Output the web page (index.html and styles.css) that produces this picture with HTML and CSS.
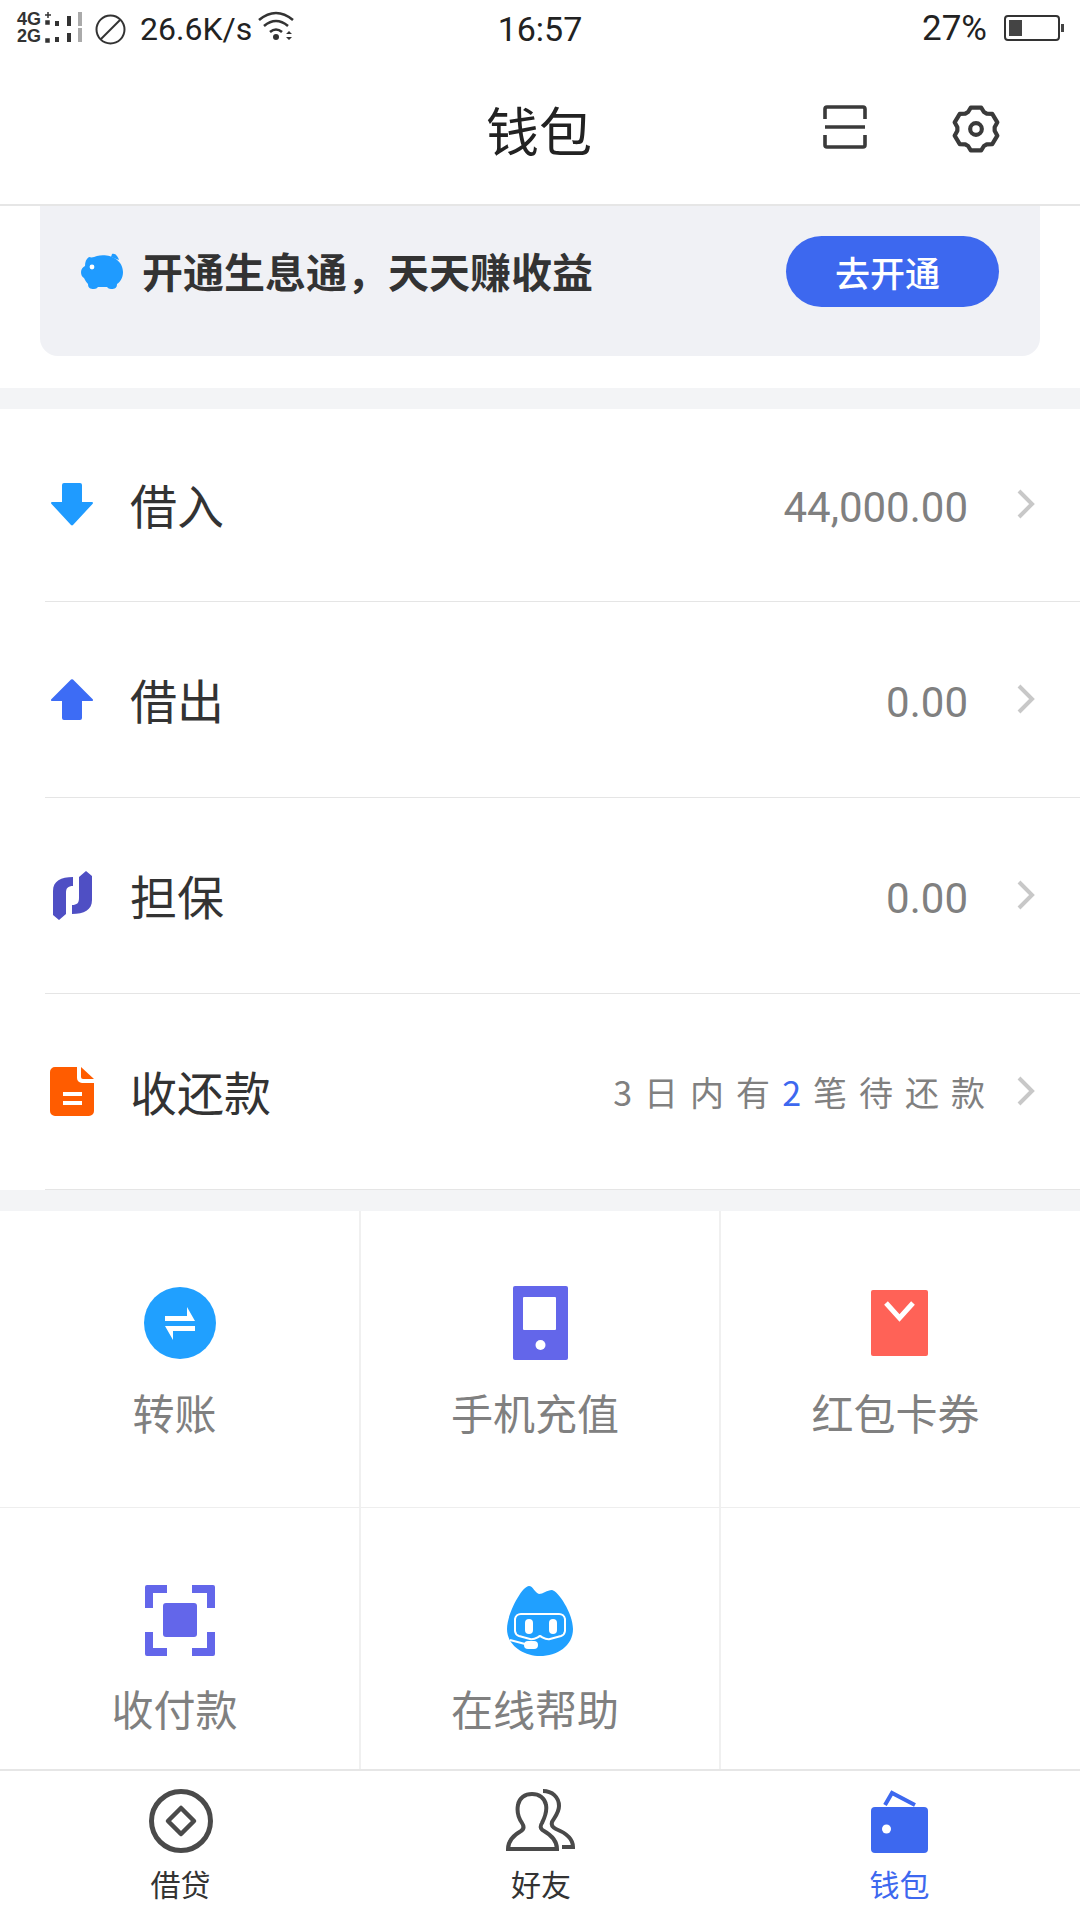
FILE: index.html
```html
<!DOCTYPE html>
<html lang="zh-CN">
<head>
<meta charset="UTF-8" />
<meta name="viewport" content="width=device-width, initial-scale=1" />
<title>钱包</title>
<link rel="stylesheet" href="styles.css">
</head>
<body>
<div class="page">

  <div class="status">
    <div class="status-left">
      <svg class="sig" width="68" height="32" viewBox="0 0 68 32">
        <text x="0" y="13" class="sig-text">4G</text>
        <text x="0" y="30" class="sig-text">2G</text>
        <path d="M28 3h6M31 0v6M29 9h3v3h-3zM29 27h3v3h-3z" class="sig-mark"/>
        <rect x="38" y="9" width="4" height="5" fill="#333"/>
        <rect x="50" y="4" width="4" height="10" fill="#333"/>
        <rect x="61" y="0" width="4" height="14" fill="#aaa"/>
        <rect x="38" y="25" width="4" height="5" fill="#333"/>
        <rect x="50" y="21" width="4" height="9" fill="#333"/>
        <rect x="61" y="16" width="4" height="14" fill="#aaa"/>
      </svg>
      <svg class="nodist" width="31" height="31" viewBox="0 0 31 31">
        <circle cx="15.5" cy="15.5" r="14" fill="none" stroke="#333" stroke-width="2"/>
        <path d="M6 25L25 6" stroke="#333" stroke-width="2"/>
      </svg>
      <span class="speed">26.6K/s</span>
      <svg class="wifi" width="37" height="31" viewBox="0 0 37 31">
        <g fill="none" stroke="#333" stroke-width="2.6">
          <path d="M1 10Q18 -4 35 10"/>
          <path d="M6 16Q18 6 30 16"/>
          <path d="M12 22Q18 17 24 22"/>
        </g>
        <circle cx="18" cy="27" r="3" fill="#333"/>
        <path d="M28 24l3 -3l3 3zM28 27l3 3l3 -3z" fill="#333"/>
      </svg>
    </div>
    <div class="time">16:57</div>
    <div class="status-right">
      <span class="pct">27%</span>
      <div class="battery"><div class="battery-fill"></div></div>
      <div class="battery-nub"></div>
    </div>
  </div>

  <header class="nav">
    <h1 class="nav-title">钱包</h1>
    <svg class="nav-scan" width="44" height="44" viewBox="0 0 44 44" fill="none" stroke="#3a3a3a" stroke-width="3.6">
      <path d="M2 14V4a2 2 0 0 1 2 -2h36a2 2 0 0 1 2 2v10"/>
      <path d="M2 22H42"/>
      <path d="M2 30V40a2 2 0 0 0 2 2h36a2 2 0 0 0 2 -2V30"/>
    </svg>
    <svg class="nav-gear" width="50" height="50" viewBox="0 0 48 48" fill="none" stroke="#3a3a3a" stroke-width="4" stroke-linejoin="round">
      <path d="M16.4 7.7L19 3.5H29L31.6 7.7L34.3 9.25L39.6 9.5L44.5 17.6L41.9 22.4V25.6L44.5 30.4L39.6 38.5L34.3 38.75L31.6 40.3L29 44.5H19L16.4 40.3L13.7 38.75L8.4 38.5L3.5 30.4L6.1 25.6V22.4L3.5 17.6L8.4 9.5L13.7 9.25Z"/>
      <circle cx="24" cy="24" r="5.6"/>
    </svg>
  </header>

  <section class="promo">
    <div class="banner">
      <svg class="pig" width="42" height="37" viewBox="0 0 42 37">
        <path d="M31 1C34 0 37 3 38 7L30 4Z" fill="#1f9bff"/>
        <path d="M8 4C11 5 13 4 16 3C27 0 42 6 42 19C42 25 39 29 36 31C36 35 34 36 30 36C28 36 27 35 26 34H17C16 35 15 36 13 36C9 36 7 35 7 31C5 29 4 27 3 25C1 24 0 22 0 19C0 16 2 14 4 13C4 9 5 6 8 4Z" fill="#1f9bff"/>
        <circle cx="11" cy="14" r="2.4" fill="#fff"/>
      </svg>
      <span class="banner-text">开通生息通，天天赚收益</span>
      <span class="banner-btn">去开通</span>
    </div>
  </section>

  <div class="gap"></div>

  <section class="list">
    <div class="row">
      <div class="row-icon">
        <svg width="42" height="43" viewBox="0 0 42 43"><path d="M11 2a2 2 0 0 1 2 -2H29a2 2 0 0 1 2 2V19H41a1 1 0 0 1 0.7 1.7L22 42a1.500 1.500 0 0 1 -2 0L0.300 20.700A1 1 0 0 1 1 19H11Z" fill="#1f9bff"/></svg>
      </div>
      <span class="row-label">借入</span>
      <span class="row-value">44,000.00</span>
      <svg class="chev" width="20" height="32" viewBox="0 0 20 32"><path d="M3 3L16 16L3 29" fill="none" stroke="#c8c8c8" stroke-width="4"/></svg>
    </div>
    <div class="row">
      <div class="row-icon">
        <svg width="42" height="41" viewBox="0 0 42 41"><path d="M11 39a2 2 0 0 0 2 2H29a2 2 0 0 0 2 -2V22H41a1 1 0 0 0 0.7 -1.700L22 0.600a1.500 1.500 0 0 0 -2 0L0.300 20.300A1 1 0 0 0 1 22H11Z" fill="#3d6cf5"/></svg>
      </div>
      <span class="row-label">借出</span>
      <span class="row-value">0.00</span>
      <svg class="chev" width="20" height="32" viewBox="0 0 20 32"><path d="M3 3L16 16L3 29" fill="none" stroke="#c8c8c8" stroke-width="4"/></svg>
    </div>
    <div class="row">
      <div class="row-icon">
        <svg width="39" height="49" viewBox="0 0 39 49" fill="#4f4fc4">
          <path d="M20 6V15C15 15 13 17 13 22V43L6 49L0 44V20C0 10 8 6 20 6Z"/>
          <path d="M19 43V34C24 34 26 32 26 27V6L33 0L39 5V29C39 39 31 43 19 43Z"/>
        </svg>
      </div>
      <span class="row-label">担保</span>
      <span class="row-value">0.00</span>
      <svg class="chev" width="20" height="32" viewBox="0 0 20 32"><path d="M3 3L16 16L3 29" fill="none" stroke="#c8c8c8" stroke-width="4"/></svg>
    </div>
    <div class="row row-last">
      <div class="row-icon">
        <svg width="44" height="49" viewBox="0 0 44 49">
          <path d="M5 0H27V11a5 5 0 0 0 5 5H44V44a5 5 0 0 1 -5 5H5a5 5 0 0 1 -5 -5V5a5 5 0 0 1 5 -5Z" fill="#ff5c00"/>
          <path d="M31 0L44 12H33a2 2 0 0 1 -2 -2Z" fill="#ff5c00"/>
          <rect x="13" y="25" width="19" height="4" fill="#fff"/>
          <rect x="13" y="34" width="19" height="4" fill="#fff"/>
        </svg>
      </div>
      <span class="row-label">收还款</span>
      <span class="row-note">3日内有<em>2</em>笔待还款</span>
      <svg class="chev" width="20" height="32" viewBox="0 0 20 32"><path d="M3 3L16 16L3 29" fill="none" stroke="#c8c8c8" stroke-width="4"/></svg>
    </div>
  </section>

  <div class="gap"></div>

  <section class="grid">
    <div class="cell cell-tall">
      <div class="cell-icon">
        <svg width="72" height="72" viewBox="0 0 72 72">
          <circle cx="36" cy="36" r="36" fill="#20a0ff"/>
          <path d="M21 29H43V20L51 34H21Z M51 44H29V53L21 39H51Z" fill="#fff"/>
        </svg>
      </div>
      <span class="cell-label">转账</span>
    </div>
    <div class="cell cell-tall">
      <div class="cell-icon">
        <svg width="55" height="74" viewBox="0 0 55 74">
          <rect width="55" height="74" rx="2" fill="#6366ea"/>
          <rect x="10" y="11" width="33" height="33" rx="1" fill="#fff"/>
          <circle cx="27.500" cy="59" r="5" fill="#fff"/>
        </svg>
      </div>
      <span class="cell-label">手机充值</span>
    </div>
    <div class="cell cell-tall">
      <div class="cell-icon cell-icon-shift">
        <svg width="57" height="66" viewBox="0 0 57 66">
          <rect width="57" height="66" rx="2" fill="#ff6257"/>
          <path d="M15 13L28.500 28L42 13" fill="none" stroke="#fff" stroke-width="5"/>
        </svg>
      </div>
      <span class="cell-label">红包卡券</span>
    </div>
    <div class="cell">
      <div class="cell-icon">
        <svg width="70" height="71" viewBox="0 0 70 71" fill="#6366ea">
          <path d="M2 0H22V8H8V23H0V2a2 2 0 0 1 2 -2Z"/>
          <path d="M68 0H47V8H62V23H70V2a2 2 0 0 0 -2 -2Z"/>
          <path d="M2 71H22V63H8V47H0V69a2 2 0 0 0 2 2Z"/>
          <path d="M68 71H47V63H62V47H70V69a2 2 0 0 1 -2 2Z"/>
          <rect x="18" y="18" width="34" height="34" rx="3"/>
        </svg>
      </div>
      <span class="cell-label">收付款</span>
    </div>
    <div class="cell">
      <div class="cell-icon">
        <svg width="66" height="71" viewBox="0 0 66 71">
          <path d="M22 1C26 1 28 8 32 9C36 9 40 5 45 5C51 6 66 28 66 44C66 61 50 71 33 71C16 71 0 60 0 44C0 29 15 1 22 1Z" fill="#20a0ff"/>
          <path d="M8 34a6 6 0 0 1 6 -5H52a6 6 0 0 1 6 5V46a6 6 0 0 1 -4 5L43 54C39 55 37 53 33 51C29 53 27 55 23 54L12 51a6 6 0 0 1 -4 -5Z" fill="none" stroke="#fff" stroke-width="2"/>
          <rect x="18" y="34" width="8" height="15" rx="4" fill="#fff"/>
          <rect x="42" y="34" width="8" height="15" rx="4" fill="#fff"/>
          <path d="M3 55L18 59" stroke="#fff" stroke-width="2"/>
          <rect x="17" y="56" width="14" height="8" rx="4" fill="#fff"/>
        </svg>
      </div>
      <span class="cell-label">在线帮助</span>
    </div>
    <div class="cell"></div>
  </section>

  <nav class="tabs">
    <div class="tab">
      <svg width="64" height="64" viewBox="0 0 64 64" fill="none" stroke="#4a4a4a">
        <circle cx="32" cy="32" r="29.500" stroke-width="5"/>
        <path d="M32 19L45 32L32 45L19 32Z" stroke-width="4.500" stroke-linejoin="round"/>
      </svg>
      <span class="tab-label">借贷</span>
    </div>
    <div class="tab">
      <svg width="70" height="64" viewBox="0 0 70 64" fill="none" stroke="#4a4a4a" stroke-width="4">
        <path d="M2 60C2 51 8 46 15 42C18 40 18 37 16 34C12 28 11 21 12 16C13 9 19 5 26 5C33 5 39 9 40 16C41 21 39 28 36 34C34 37 34 40 38 42C45 46 51 51 51 60Z"/>
        <path d="M37 2C46 2 53 8 53 17C53 24 48 29 46 33C45 36 46 38 50 40C60 44 67 49 67 58H56"/>
      </svg>
      <span class="tab-label">好友</span>
    </div>
    <div class="tab tab-on">
      <svg width="57" height="64" viewBox="0 0 57 64">
        <path d="M14 16L21 4L44 16" fill="none" stroke="#3d68ef" stroke-width="4"/>
        <rect y="18" width="57" height="46" rx="4" fill="#3d68ef"/>
        <circle cx="15.500" cy="40" r="4.500" fill="#fff"/>
      </svg>
      <span class="tab-label">钱包</span>
    </div>
  </nav>

</div>
</body>
</html>
```

FILE: styles.css
```css
* { box-sizing: border-box; }
body { margin: 0; padding: 0; background: #fff; font-family: "Noto Sans CJK SC", Roboto, sans-serif; color: #333; }
.page { width: 1080px; height: 1920px; overflow: hidden; display: flex; flex-direction: column; }

.status { height: 60px; display: flex; align-items: center; position: relative; padding: 0 16px 2px 17px; font-family: Roboto, sans-serif; color: #222; }
.status-left { display: flex; align-items: center; }
.sig { margin-top: -2px; overflow: visible; }
.sig-text { font-family: "Liberation Sans", sans-serif; font-size: 18px; font-weight: bold; fill: #333; }
.sig-mark { fill: #333; stroke: #333; stroke-width: 1.500; }
.nodist { margin-left: 10px; }
.speed { font-size: 32px; margin-left: 14px; }
.wifi { margin-left: 6px; margin-top: -8px; }
.time { font-size: 34px; position: absolute; left: 0; right: 0; text-align: center; top: 9px; }
.status-right { margin-left: auto; display: flex; align-items: center; }
.pct { font-size: 35px; margin-right: 17px; margin-top: -2px; }
.battery { width: 56px; height: 26px; border: 2px solid #333; border-radius: 4px; padding: 3px; margin-top: -2px; }
.battery-fill { width: 13px; height: 100%; background: #444; }
.battery-nub { width: 3px; height: 8px; background: #444; margin-left: 1px; margin-top: -2px; }

.nav { height: 146px; border-bottom: 2px solid #e6e6e6; display: flex; align-items: center; position: relative; padding-bottom: 3px; }
.nav-title { position: absolute; left: -2px; right: 0; top: 39px; margin: 0; text-align: center; font-size: 53px; line-height: 60px; font-weight: 400; color: #222; }
.nav-scan { margin-left: 823px; margin-top: -7px; }
.nav-gear { margin-left: 84px; margin-top: -4px; }

.promo { height: 182px; padding: 0 40px; }
.banner { height: 150px; background: #f0f1f5; border-radius: 0 0 18px 18px; display: flex; align-items: center; padding: 0 41px 20px; }
.pig { margin-top: 0; }
.banner-text { font-size: 41px; font-weight: 700; color: #333; margin-left: 19px; margin-top: -2px; white-space: nowrap; }
.banner-btn { margin-left: auto; width: 213px; height: 71px; border-radius: 36px; background: #3d68ef; color: #fff; font-size: 35px; font-weight: 500; display: flex; align-items: center; justify-content: center; padding-right: 10px; }

.gap { height: 21px; background: #f3f4f6; flex: none; }

.list { flex: none; }
.row { height: 196px; margin-left: 45px; border-bottom: 1px solid #e5e5e5; display: flex; align-items: center; padding: 6px 44px 0 0; }
.row:first-child { height: 193px; padding-top: 5px; }
.row-icon { width: 54px; display: flex; justify-content: center; flex: none; margin-top: -6px; }
.row-label { font-size: 47px; margin-left: 31px; margin-top: -8px; color: #333; }
.row-value { margin-left: auto; margin-right: 48px; font-family: Roboto, sans-serif; font-size: 42px; color: #808080; }
.row-note { margin-left: auto; margin-right: 19px; margin-top: -6px; font-size: 34px; color: #808080; letter-spacing: 12px; }
.row-note em { font-style: normal; color: #3d68ef; }
.chev { flex: none; margin-top: -8px; }

.grid { display: grid; grid-template-columns: 361px 360px 359px; grid-template-rows: 297px 261px; flex: none; }
.cell { border-right: 2px solid #f0f0f0; display: flex; flex-direction: column; align-items: center; padding-top: 75px; }
.cell-tall { border-bottom: 1px solid #eee; }
.cell:nth-child(3n) { border-right: 0; }
.cell-icon { height: 74px; display: flex; align-items: center; }
.cell-icon-shift { margin-left: -3px; }
.cell-label { font-size: 42px; line-height: 50px; color: #808080; margin-top: 26px; padding-right: 10px; }
.cell-tall .cell-label { margin-top: 27px; }

.tabs { flex: 1; border-top: 2px solid #e6e6e6; display: grid; grid-template-columns: 361px 360px 359px; }
.tab { display: flex; flex-direction: column; align-items: center; padding-top: 18px; }
.tab-label { font-size: 30px; line-height: 40px; margin-top: 10px; color: #333; }
.tab-on { padding-right: 2px; }
.tab-on .tab-label { color: #3d68ef; }
```
